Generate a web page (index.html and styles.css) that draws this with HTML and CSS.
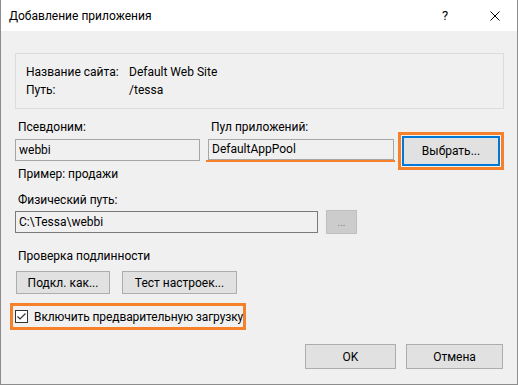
FILE: index.html
```html
<!DOCTYPE html>
<html lang="ru">

<head>
    <meta charset="UTF-8" />
    <title>Добавление приложения</title>
    <link rel="stylesheet" href="styles.css">
</head>

<body>
    <div class="window">
        <!-- заголовок -->
        <div class="titlebar">
            <span class="title">Добавление приложения</span>
            <span class="help">?</span>
            <svg class="close" width="10" height="10" viewBox="0 0 10 10">
                <path d="M0.5 0.5 L9.5 9.5 M9.5 0.5 L0.5 9.5" stroke="#000" stroke-width="1" fill="none" />
            </svg>
        </div>

        <div class="content">
            <!-- сайт -->
            <div class="site-box">
                <div class="info-row"><span class="info-label">Название сайта:</span><span>Default Web Site</span></div>
                <div class="info-row"><span class="info-label">Путь:</span><span>/tessa</span></div>
            </div>

            <div class="alias-row">
                <div class="field alias">
                    <div class="label">Псевдоним:</div>
                    <div class="textbox readonly">webbi</div>
                    <div class="label hint">Пример: продажи</div>
                </div>
                <div class="field pool">
                    <div class="label">Пул приложений:</div>
                    <div class="textbox readonly">DefaultAppPool</div>
                    <div class="underline"></div>
                </div>
                <div class="mark select-mark">
                    <div class="btn focused">Выбрать...</div>
                </div>
            </div>

            <div class="label path-label">Физический путь:</div>
            <div class="path-row">
                <div class="textbox path">C:\Tessa\webbi</div>
                <div class="btn disabled">...</div>
            </div>

            <div class="label auth-label">Проверка подлинности</div>
            <div class="auth-row">
                <div class="btn connect">Подкл. как...</div>
                <div class="btn test">Тест настроек...</div>
            </div>

            <div class="mark check-mark">
                <svg class="checkbox" width="13" height="13" viewBox="0 0 13 13">
                    <rect x="0.5" y="0.5" width="12" height="12" fill="#fff" stroke="#333" />
                    <path d="M2.5 6.5 L5 9 L10.5 3.5" stroke="#333" stroke-width="1.2" fill="none" />
                </svg>
                <span class="check-text">Включить предварительную загрузку</span>
            </div>

            <div class="footer">
                <div class="btn ok">OK</div>
                <div class="btn cancel">Отмена</div>
            </div>
        </div>
    </div>
</body>

</html>
```

FILE: styles.css
```css
body {
    margin: 0;
    padding: 0;
    font-family: Roboto, "Noto Sans", sans-serif;
    font-size: 12px;
    color: #000;
}

.window {
    width: 518px;
    height: 385px;
    box-sizing: border-box;
    background-color: #f0f0f0;
    border: 1px solid #8c8c8c;
    border-top: none;
    display: flex;
    flex-direction: column;
}

.titlebar {
    height: 31px;
    background-color: #fff;
    display: flex;
    align-items: center;
    padding-left: 8px;
    padding-right: 17px;
    flex-shrink: 0;
}

.title {
    flex: 1;
    line-height: 16px;
}

.help {
    width: 6px;
    margin-right: 42px;
    font-size: 13px;
}

.content {
    padding: 0 13px 0 14px;
    display: flex;
    flex-direction: column;
}

.label {
    line-height: 18px;
    padding-left: 3px;
    white-space: nowrap;
}

/* блок сайта */
.site-box {
    margin-top: 22px;
    border: 1px solid #dcdcdc;
    padding: 9px 10px;
}

.info-row {
    display: flex;
    line-height: 18px;
}

.info-label {
    width: 103px;
}

/* псевдоним и пул */
.alias-row {
    display: flex;
    align-items: flex-start;
    margin-top: 9px;
}

.field {
    display: flex;
    flex-direction: column;
}

.field .textbox {
    margin-top: 3px;
}

.alias {
    width: 187px;
}

.pool {
    width: 186px;
    margin-left: 8px;
}

.hint {
    margin-top: 4px;
}

.textbox {
    height: 22px;
    box-sizing: border-box;
    border: 1px solid #7a7a7a;
    background-color: #f0f0f0;
    padding-left: 3px;
    line-height: 20px;
    white-space: nowrap;
}

.textbox.readonly {
    border-color: #a6a6a6;
}

.pool .textbox {
    height: 21px;
    line-height: 19px;
}

.underline {
    height: 2px;
    width: 189px;
    margin-left: -2px;
    background-color: #f7802a;
}

.mark {
    border: 3px solid #f7802a;
}

.select-mark {
    margin-top: 14px;
    margin-left: 4px;
    padding: 1px;
}

/* кнопки */
.btn {
    box-sizing: border-box;
    background-color: #e1e1e1;
    border: 1px solid #adadad;
    display: flex;
    align-items: center;
    justify-content: center;
    white-space: nowrap;
}

.btn.focused {
    width: 98px;
    height: 30px;
    border: 2px solid #0078d7;
}

.btn.disabled {
    width: 31px;
    height: 24px;
    background-color: #cccccc;
    border-color: #bfbfbf;
    color: #838383;
    font-size: 10px;
}

/* физический путь */
.path-label {
    margin-top: 8px;
}

.path-row {
    display: flex;
    align-items: center;
    gap: 8px;
    margin-top: 1px;
}

.textbox.path {
    width: 303px;
}

/* проверка подлинности */
.auth-label {
    margin-top: 13px;
}

.auth-row {
    display: flex;
    gap: 12px;
    margin-top: 6px;
    margin-left: 1px;
}

.connect {
    width: 94px;
    height: 23px;
}

.test {
    width: 115px;
    height: 23px;
}

/* предварительная загрузка */
.check-mark {
    margin-top: 9px;
    margin-left: -5px;
    width: 236px;
    height: 27px;
    box-sizing: border-box;
    display: flex;
    align-items: center;
    gap: 6px;
    padding-left: 2px;
    white-space: nowrap;
}

.check-text {
    letter-spacing: -0.1px;
}

.checkbox {
    flex-shrink: 0;
}

.footer {
    display: flex;
    justify-content: flex-end;
    gap: 10px;
    margin-top: 14px;
    margin-right: 1px;
}

.ok {
    width: 91px;
    height: 25px;
}

.cancel {
    width: 97px;
    height: 25px;
}
```
